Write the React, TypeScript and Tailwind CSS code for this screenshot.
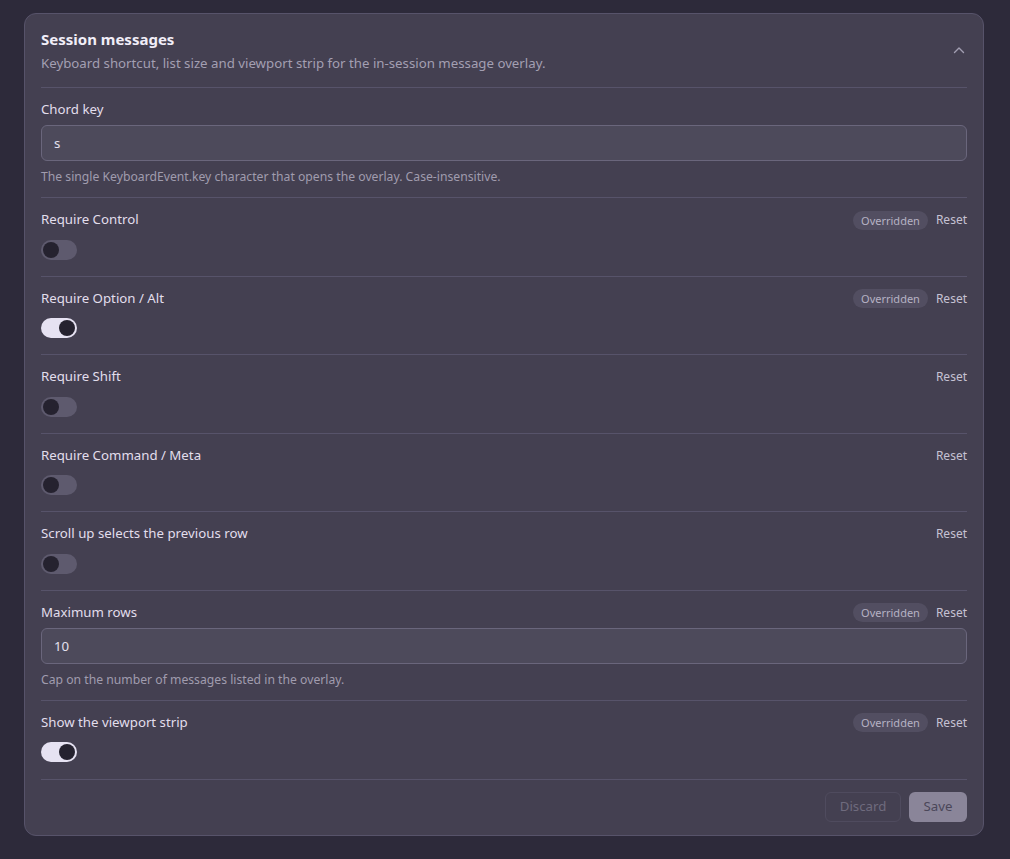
import { useState } from "react";

type Row =
  | { kind: "toggle"; label: string; on: boolean; overridden: boolean }
  | { kind: "input"; label: string; value: string; help: string; overridden: boolean; reset: boolean };

const ROWS: Row[] = [
  {
    kind: "input",
    label: "Chord key",
    value: "s",
    help: "The single KeyboardEvent.key character that opens the overlay. Case-insensitive.",
    overridden: false,
    reset: false,
  },
  { kind: "toggle", label: "Require Control", on: false, overridden: true },
  { kind: "toggle", label: "Require Option / Alt", on: true, overridden: true },
  { kind: "toggle", label: "Require Shift", on: false, overridden: false },
  { kind: "toggle", label: "Require Command / Meta", on: false, overridden: false },
  { kind: "toggle", label: "Scroll up selects the previous row", on: false, overridden: false },
  {
    kind: "input",
    label: "Maximum rows",
    value: "10",
    help: "Cap on the number of messages listed in the overlay.",
    overridden: true,
    reset: true,
  },
  { kind: "toggle", label: "Show the viewport strip", on: true, overridden: true },
];

function Toggle({ on }: { on: boolean }) {
  const [value, setValue] = useState(on);
  return (
    <button
      onClick={() => setValue(!value)}
      className={`flex h-5 w-9 items-center rounded-full px-0.5 ${
        value ? "justify-end bg-[#e6e2f2]" : "justify-start bg-[#5e5a6e]"
      }`}
    >
      <span className="h-4 w-4 rounded-full bg-[#25222f]" />
    </button>
  );
}

function RowHead({ label, overridden, reset }: { label: string; overridden: boolean; reset: boolean }) {
  return (
    <div className="flex h-[19.5px] items-center justify-between">
      <span className="text-[13.25px] text-[#e2deec]">{label}</span>
      <div className="flex items-center gap-2">
        {overridden && (
          <span className="rounded-full bg-[#524e61] px-2 py-[2px] text-[11px] leading-[15px] text-[#b6b2c4]">
            Overridden
          </span>
        )}
        {reset && <button className="text-[12px] text-[#c6c2d3]">Reset</button>}
      </div>
    </div>
  );
}

export default function App() {
  return (
    <div
      className="min-h-[859px] bg-[#2d2a3a] px-6 pt-[13px] pb-6"
      style={{ fontFamily: '"Noto Sans", "Open Sans", sans-serif' }}
    >
      <div className="w-[960px] rounded-xl border border-[#57536a] bg-[#444051] px-4 pt-[15px] pb-[13px]">
        {/* Header */}
        <div className="flex items-start justify-between pb-[15px]">
          <div>
            <h2 className="text-[15px] font-bold leading-5 text-[#f1eef8]">Session messages</h2>
            <p className="mt-[5px] text-[13.25px] leading-[18px] text-[#a39fb2]">
              Keyboard shortcut, list size and viewport strip for the in-session message overlay.
            </p>
          </div>
          <svg width="12" height="8" viewBox="0 0 12 8" className="mt-[17px] mr-0.5" fill="none">
            <path d="M1.5 6.5 6 2l4.5 4.5" stroke="#a29eb2" strokeWidth="1.4" strokeLinecap="round" strokeLinejoin="round" />
          </svg>
        </div>

        {ROWS.map((row, i) =>
          row.kind === "input" ? (
            <div key={row.label} className="border-t border-[#57536a] pt-[12.5px] pb-[12px]">
              <RowHead label={row.label} overridden={row.overridden} reset={row.reset} />
              <input
                defaultValue={row.value}
                className="mt-[5px] h-9 w-full rounded-md border border-[#6a667c] bg-[#4d4a5b] px-3 text-[13.25px] text-[#e4e0ee] outline-none"
              />
              <p className="mt-[8px] text-[12.2px] leading-4 text-[#a09cae]">{row.help}</p>
            </div>
          ) : (
            <div
              key={row.label}
              className={`border-t border-[#57536a] pt-[12.5px] ${i === ROWS.length - 1 ? "pb-[17px]" : "pb-4"}`}
            >
              <RowHead label={row.label} overridden={row.overridden} reset={true} />
              <div className="mt-[9.5px]">
                <Toggle on={row.on} />
              </div>
            </div>
          )
        )}

        {/* Footer */}
        <div className="flex justify-end gap-2 border-t border-[#57536a] pt-3">
          <button className="h-[30px] w-[76px] rounded-md border border-[#4f4b5e] text-[13.25px] text-[#6f6b7e]">
            Discard
          </button>
          <button className="h-[30px] w-[58px] rounded-md bg-[#8a8599] text-[13.25px] text-[#4b4759]">Save</button>
        </div>
      </div>
    </div>
  );
}
